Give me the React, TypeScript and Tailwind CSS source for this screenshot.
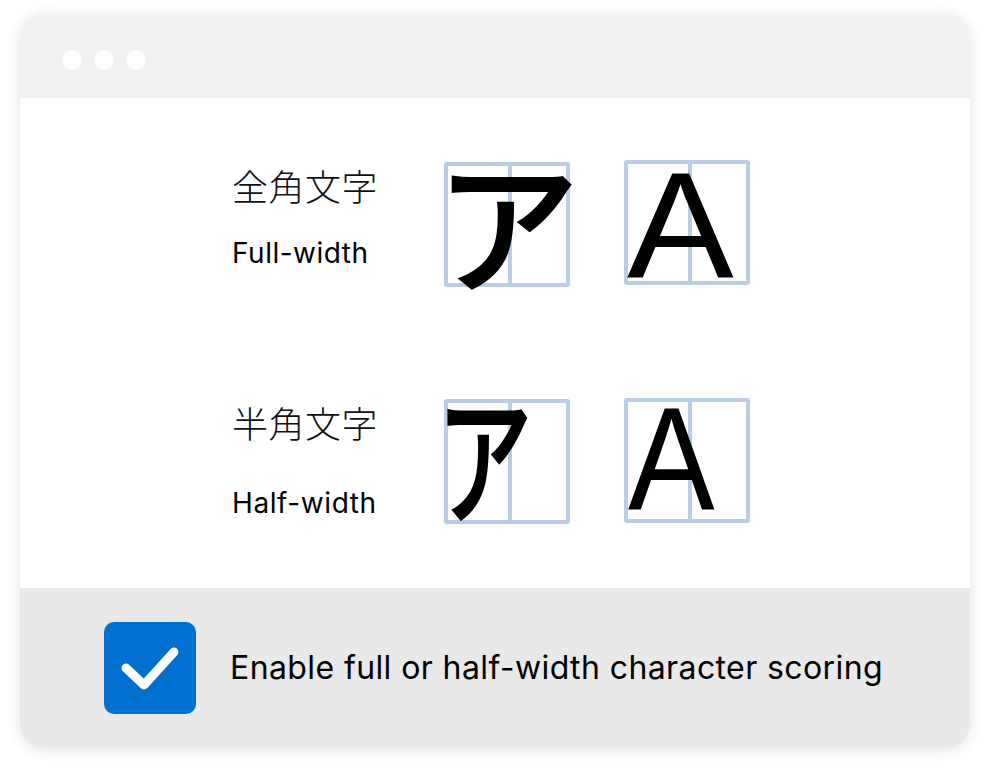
import React from "react";

const Box = ({ children }: { children?: React.ReactNode }) => (
  <div className="relative w-[126px] h-[125px] rounded-[3px] border-[4px] border-[#bccce2] bg-white">
    <div className="absolute left-[60px] top-0 bottom-0 w-[4px] bg-[#bccce2]" />
    {children}
  </div>
);

export default function App() {
  return (
    <div className="w-[990px] h-[772px] bg-white pt-[14px] px-[20px]">
      <div className="w-[950px] h-[734px] rounded-[24px] overflow-hidden shadow-[0_2px_14px_rgba(120,130,150,0.22)] flex flex-col">
        <div className="h-[84px] bg-[#f1f1f1] flex items-center pl-[42px] pt-[8px] gap-[12px]">
          <div className="w-[20px] h-[20px] rounded-full bg-white" />
          <div className="w-[20px] h-[20px] rounded-full bg-white" />
          <div className="w-[20px] h-[20px] rounded-full bg-white" />
        </div>
        <div className="h-[490px] bg-white flex flex-col pl-[212px]">
          <div className="flex mt-[64px]">
            <div className="w-[212px] pt-[1px]">
              <div className="text-[36px] leading-[44px] text-[#111] font-['Noto_Sans_CJK_JP',sans-serif] tracking-[0.5px] font-light">全角文字</div>
              <div className="mt-[29px] text-[28px] leading-[34px] text-black font-['Inter',sans-serif] tracking-[0.5px]">Full-width</div>
            </div>
            <Box>
              <span className="absolute left-[-12px] top-[-18px] text-[143px] leading-[143px] text-black font-['Noto_Sans_CJK_JP',sans-serif] [-webkit-text-stroke:4px_black] pointer-events-none">ア</span>
            </Box>
            <div className="w-[54px]" />
            <div className="-mt-[2px]">
              <Box>
                <span className="absolute left-[-1px] top-[-15px] text-[151px] leading-[151px] text-black font-['Liberation_Sans',sans-serif] origin-left scale-x-[1.06]">A</span>
              </Box>
            </div>
          </div>
          <div className="flex mt-[112px]">
            <div className="w-[212px] pt-[1px]">
              <div className="text-[36px] leading-[44px] text-[#111] font-['Noto_Sans_CJK_JP',sans-serif] tracking-[0.5px] font-light">半角文字</div>
              <div className="mt-[42px] text-[28px] leading-[34px] text-black font-['Inter',sans-serif] tracking-[0.6px]">Half-width</div>
            </div>
            <Box>
              <span className="absolute left-[-11px] top-[-21px] text-[140px] leading-[140px] text-black font-['Noto_Sans_CJK_JP',sans-serif] [-webkit-text-stroke:4px_black] origin-left scale-x-[0.68] pointer-events-none">ア</span>
            </Box>
            <div className="w-[54px]" />
            <div className="-mt-[1px]">
              <Box>
                <span className="absolute left-[0px] top-[-15px] text-[146px] leading-[146px] text-black font-['Liberation_Sans',sans-serif] origin-left scale-x-[0.89]">A</span>
              </Box>
            </div>
          </div>
        </div>
        <div className="h-[160px] bg-[#e9e9e9] flex items-center pl-[84px]">
          <div className="w-[92px] h-[92px] rounded-[10px] bg-[#0070d0] flex items-center justify-center">
            <svg width="92" height="92" viewBox="0 0 92 92">
              <path d="M22 46 L40 63 L70 30" fill="none" stroke="white" strokeWidth="9" strokeLinecap="round" strokeLinejoin="round" />
            </svg>
          </div>
          <div className="ml-[34px] text-[32px] leading-[38px] text-black font-['Inter',sans-serif] tracking-[0.4px]">
            Enable full or half-width character scoring
          </div>
        </div>
      </div>
    </div>
  );
}
